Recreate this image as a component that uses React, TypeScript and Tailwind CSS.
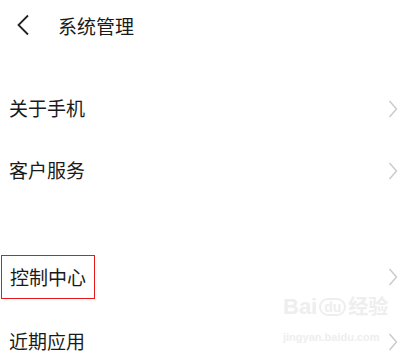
const cjk = { fontFamily: '"Noto Sans CJK SC", "Noto Sans", sans-serif' };

function Row({ label, boxed, h }: { label: string; boxed?: boolean; h: string }) {
  return (
    <div className={`flex items-center justify-between ${h}`}>
      <div className={boxed ? "ml-[1px] flex h-[44px] w-[94px] items-center border border-[#e81818] pl-[8px]" : "pl-[9px]"}>
        <span className="text-[19px] leading-none text-[#1a1a1a]">{label}</span>
      </div>
      <svg width="10" height="18" viewBox="0 0 10 18" className="mr-[2px]">
        <path d="M1.5 1 L8.5 9 L1.5 17" fill="none" stroke="#c9c9c9" strokeWidth="1.4" />
      </svg>
    </div>
  );
}

export default function App() {
  return (
    <div className="relative h-[351px] w-[400px] overflow-hidden bg-white" style={cjk}>
      {/* Header */}
      <div className="flex h-[50px] items-center">
        <svg width="14" height="22" viewBox="0 0 14 22" className="ml-[16px]">
          <path d="M12 1.5 L2.5 11 L12 20.5" fill="none" stroke="#222" strokeWidth="1.8" />
        </svg>
        <span className="ml-[28px] text-[19px] leading-none text-[#1a1a1a]">系统管理</span>
      </div>

      <div className="h-[28px]" />
      <Row label="关于手机" h="h-[62px]" />
      <Row label="客户服务" h="h-[62px]" />

      <div className="h-[42px]" />
      <Row label="控制中心" boxed h="h-[65px]" />
      <Row label="近期应用" h="h-[65px]" />

      {/* watermark */}
      <div className="pointer-events-none absolute left-[283px] top-[296px] flex flex-col items-start text-[#eeeeee]">
        <div className="flex items-center text-[22px] font-bold leading-none" style={{ fontFamily: '"Liberation Sans", "Noto Sans CJK SC", sans-serif' }}>
          <span>Bai</span>
          <span className="mx-[2px] rounded-full border-2 border-[#eeeeee] px-[3px] text-[14px]">du</span>
          <span className="text-[20px]">经验</span>
        </div>
        <span className="mt-[14px] text-[11px] font-bold leading-none" style={{ fontFamily: '"Liberation Sans", sans-serif' }}>
          jingyan.baidu.com
        </span>
      </div>
    </div>
  );
}
